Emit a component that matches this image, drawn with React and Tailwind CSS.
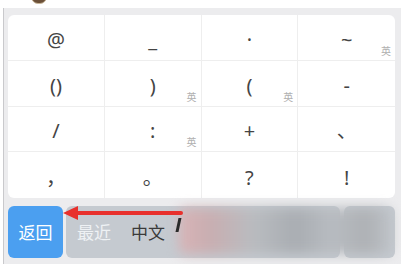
import React from 'react';

const keys = [
  { s: '@' }, { s: '_' }, { s: '·' }, { s: '~', en: true },
  { s: '()' }, { s: ')', en: true }, { s: '(', en: true }, { s: '-' },
  { s: '/' }, { s: ':', en: true }, { s: '+' }, { s: '、' },
  { s: '，' }, { s: '。' }, { s: '?' }, { s: '!' },
];

const font = { fontFamily: '"Noto Sans", "Noto Sans CJK SC", sans-serif' };

export default function App() {
  return (
    <div className="relative w-[401px] h-[264px] overflow-hidden bg-white" style={font}>
      {/* top strip with avatar edge */}
      <div className="relative h-2 bg-white">
        <div className="absolute left-[31px] -top-[10px] w-[16px] h-[14px] rounded-full bg-[#6b5038] border border-[#c9b79a]" />
      </div>

      <div className="h-[256px] ml-[3px] border-l border-[#c9c9cc] bg-[#ececee] pl-[4px] pr-[6px] pt-[7px]">
        {/* symbol card */}
        <div className="grid grid-cols-4 grid-rows-4 h-[183px] rounded-[6px] bg-white overflow-hidden">
          {keys.map((k, i) => (
            <div
              key={i}
              className={`relative flex items-center justify-center pt-[5px] text-[20px] text-[#444444] ${i % 4 !== 3 ? 'border-r' : ''} ${i < 12 ? 'border-b' : ''} border-[#eeeeee]`}
            >
              <span className="leading-none">{k.s}</span>
              {k.en && (
                <span className="absolute right-[4px] bottom-[4px] text-[10px] leading-none text-[#b0b0b0]">英</span>
              )}
            </div>
          ))}
        </div>

        {/* bottom row */}
        <div className="flex gap-[3px] mt-[8px] h-[52px]">
          <div className="w-[55px] rounded-[6px] bg-[#4b9ff0] flex items-center justify-center pt-[2px] text-white text-[17px]">
            返回
          </div>
          <div className="relative flex-1 flex gap-[4px]">
            <div className="flex-1 rounded-[6px] bg-[#c5cad0] flex items-center pl-[11px] pt-[2px] text-[17px]">
              <span className="text-[#eef1f4]">最近</span>
              <span className="ml-[20px] text-[#3a3a3a]">中文</span>
            </div>
            <div className="w-[51px] rounded-[6px] bg-[#c5cad0]" />
            {/* blurred region */}
            <div className="absolute left-[113px] top-[2px] right-[4px] bottom-[4px] rounded-[6px] blur-[6px] bg-[linear-gradient(90deg,#d8b3b6_0%,#c8aeb1_15%,#b9bcc0_35%,#a9adb2_55%,#b8bcc1_72%,#aeb1b5_88%,#bdc1c6_100%)]" />
            <div className="absolute left-[111px] top-[12px] w-[3px] h-[14px] bg-[#2a2a2a] -skew-x-12" />
          </div>
        </div>
      </div>

      {/* red arrow annotation */}
      <svg className="absolute left-[60px] top-[204px]" width="125" height="18" viewBox="0 0 125 18">
        <line x1="14" y1="9" x2="121" y2="9" stroke="#e8302c" strokeWidth="4" strokeLinecap="round" />
        <polygon points="3,9 18,2 18,16" fill="#e8302c" />
      </svg>
    </div>
  );
}
